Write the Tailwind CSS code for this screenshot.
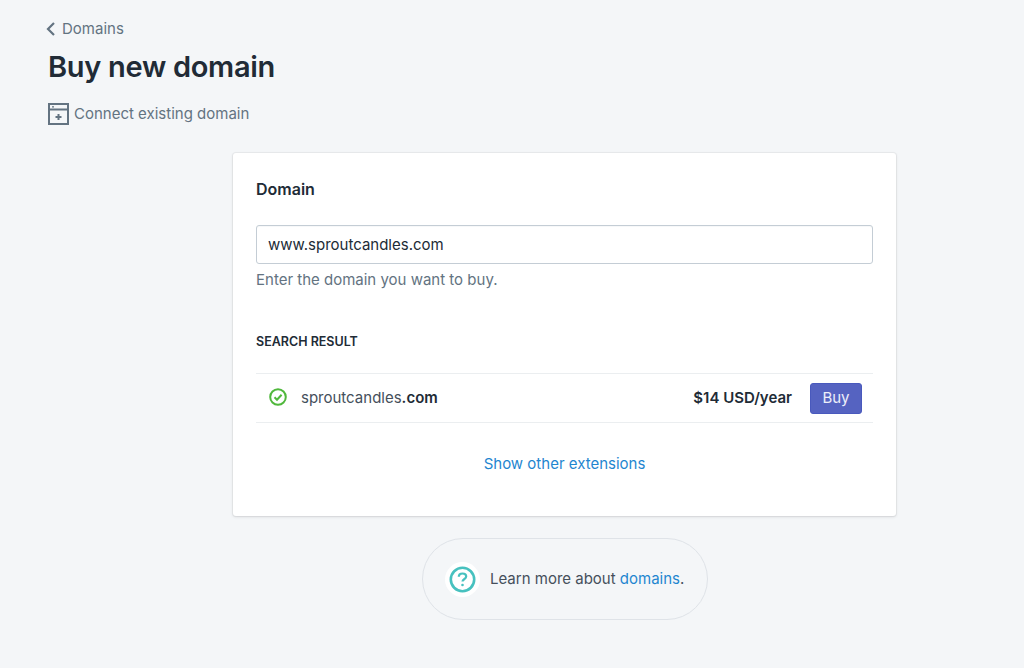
<!DOCTYPE html>
<html lang="en">
<head>
  <meta charset="UTF-8" />
  <title>Buy new domain</title>
  <script src="https://cdn.jsdelivr.net/npm/@tailwindcss/browser@4"></script>
</head>
<body class="bg-[#f4f6f8] text-[#212b36] font-['Inter',sans-serif] h-[668px] overflow-hidden">
  <!-- Header -->
  <header class="pl-[46px] pt-[19px]">
    <a href="#" class="flex items-center h-[20px] text-[#637381] text-[15px]">
      <svg class="w-[10px] h-[16px] mr-[6px]" viewBox="0 0 10 16" fill="none" stroke="#637381" stroke-width="2.2"><path d="M8 2 L2 8 L8 14"/></svg>
      Domains
    </a>
    <h1 class="pl-[2px] mt-[8px] text-[29px] leading-[40px] font-semibold tracking-[-0.3px] text-[#212b36]">Buy new domain</h1>
    <a href="#" class="flex items-center ml-[1px] mt-[15px] h-[24px] text-[#637381] text-[15px]">
      <svg class="w-[23px] h-[24px] mr-[4px]" viewBox="0 0 23 24" fill="none" stroke="#637381" stroke-width="2"><rect x="2" y="2" width="19" height="20"/><path d="M2 7.5 H21" /><path d="M5 4.8 H7" stroke-width="1.2"/><path d="M8.5 15 H14.5 M11.5 12 V18" /></svg>
      Connect existing domain
    </a>
  </header>

  <!-- Card -->
  <main class="ml-[233px] mt-[27px] w-[663px] h-[363px] bg-white rounded-[3px] shadow-[0_0_0_1px_rgba(63,63,68,0.05),0_1px_3px_0_rgba(63,63,68,0.15)] px-[23px] pt-[25px]">
    <h2 class="text-[16px] leading-[22px] font-semibold">Domain</h2>
    <input type="text" value="www.sproutcandles.com" class="block w-full mt-[25px] h-[39px] px-[11px] bg-white border border-[#c4cdd5] rounded-[3px] text-[15px] text-[#212b36] shadow-[inset_0_1px_0_0_rgba(99,115,129,0.05)]" />
    <p class="mt-[5px] text-[15px] leading-[22px] text-[#637381]">Enter the domain you want to buy.</p>
    <h3 class="mt-[43px] text-[12.5px] leading-[16px] font-semibold uppercase text-[#212b36]">Search result</h3>
    <div class="mt-[23px] h-[50px] flex items-center border-y border-[#ebeef0] pl-[13px] pr-[11px]">
      <svg class="w-[18px] h-[18px] mr-[14px] -mt-[3px]" viewBox="0 0 18 18" fill="none" stroke="#50b83c" stroke-width="2"><circle cx="9" cy="9" r="7.8"/><path d="M5.5 9.2 L8 11.7 L12.6 6.8"/></svg>
      <span class="text-[15px] text-[#454f5b]">sproutcandles<span class="font-semibold text-[#212b36]">.com</span></span>
      <span class="ml-auto text-[15px] font-semibold text-[#212b36]">$14 USD/year</span>
      <button class="ml-[18px] w-[52px] h-[31px] rounded-[3px] bg-[#5563c1] border border-[#4959bd] text-[15px] text-white/90">Buy</button>
    </div>
    <div class="mt-[31px] text-center text-[15px] leading-[20px]"><a href="#" class="text-[#1f86d0]">Show other extensions</a></div>
  </main>

  <!-- Help footer -->
  <div class="mx-auto mt-[22px] ml-[422px] w-[286px] h-[82px] rounded-full border border-[#dfe3e8] flex items-center pl-[22px]">
    <span class="w-[35px] h-[35px] rounded-full bg-white flex items-center justify-center mr-[10px]">
      <svg class="w-[27px] h-[27px]" viewBox="0 0 27 27" fill="none" stroke="#47c1bf" stroke-width="2.6"><circle cx="13.5" cy="13.5" r="11.7"/><path d="M9.8 10.8 C9.8 8.6 11.5 7.5 13.5 7.5 C15.5 7.5 17.2 8.7 17.2 10.6 C17.2 13 13.5 13 13.5 15.6" stroke-width="2.2"/><circle cx="13.5" cy="19" r="1.3" fill="#47c1bf" stroke="none"/></svg>
    </span>
    <p class="text-[15px] text-[#454f5b]">Learn more about <a href="#" class="text-[#1f86d0]">domains</a>.</p>
  </div>
</body>
</html>
